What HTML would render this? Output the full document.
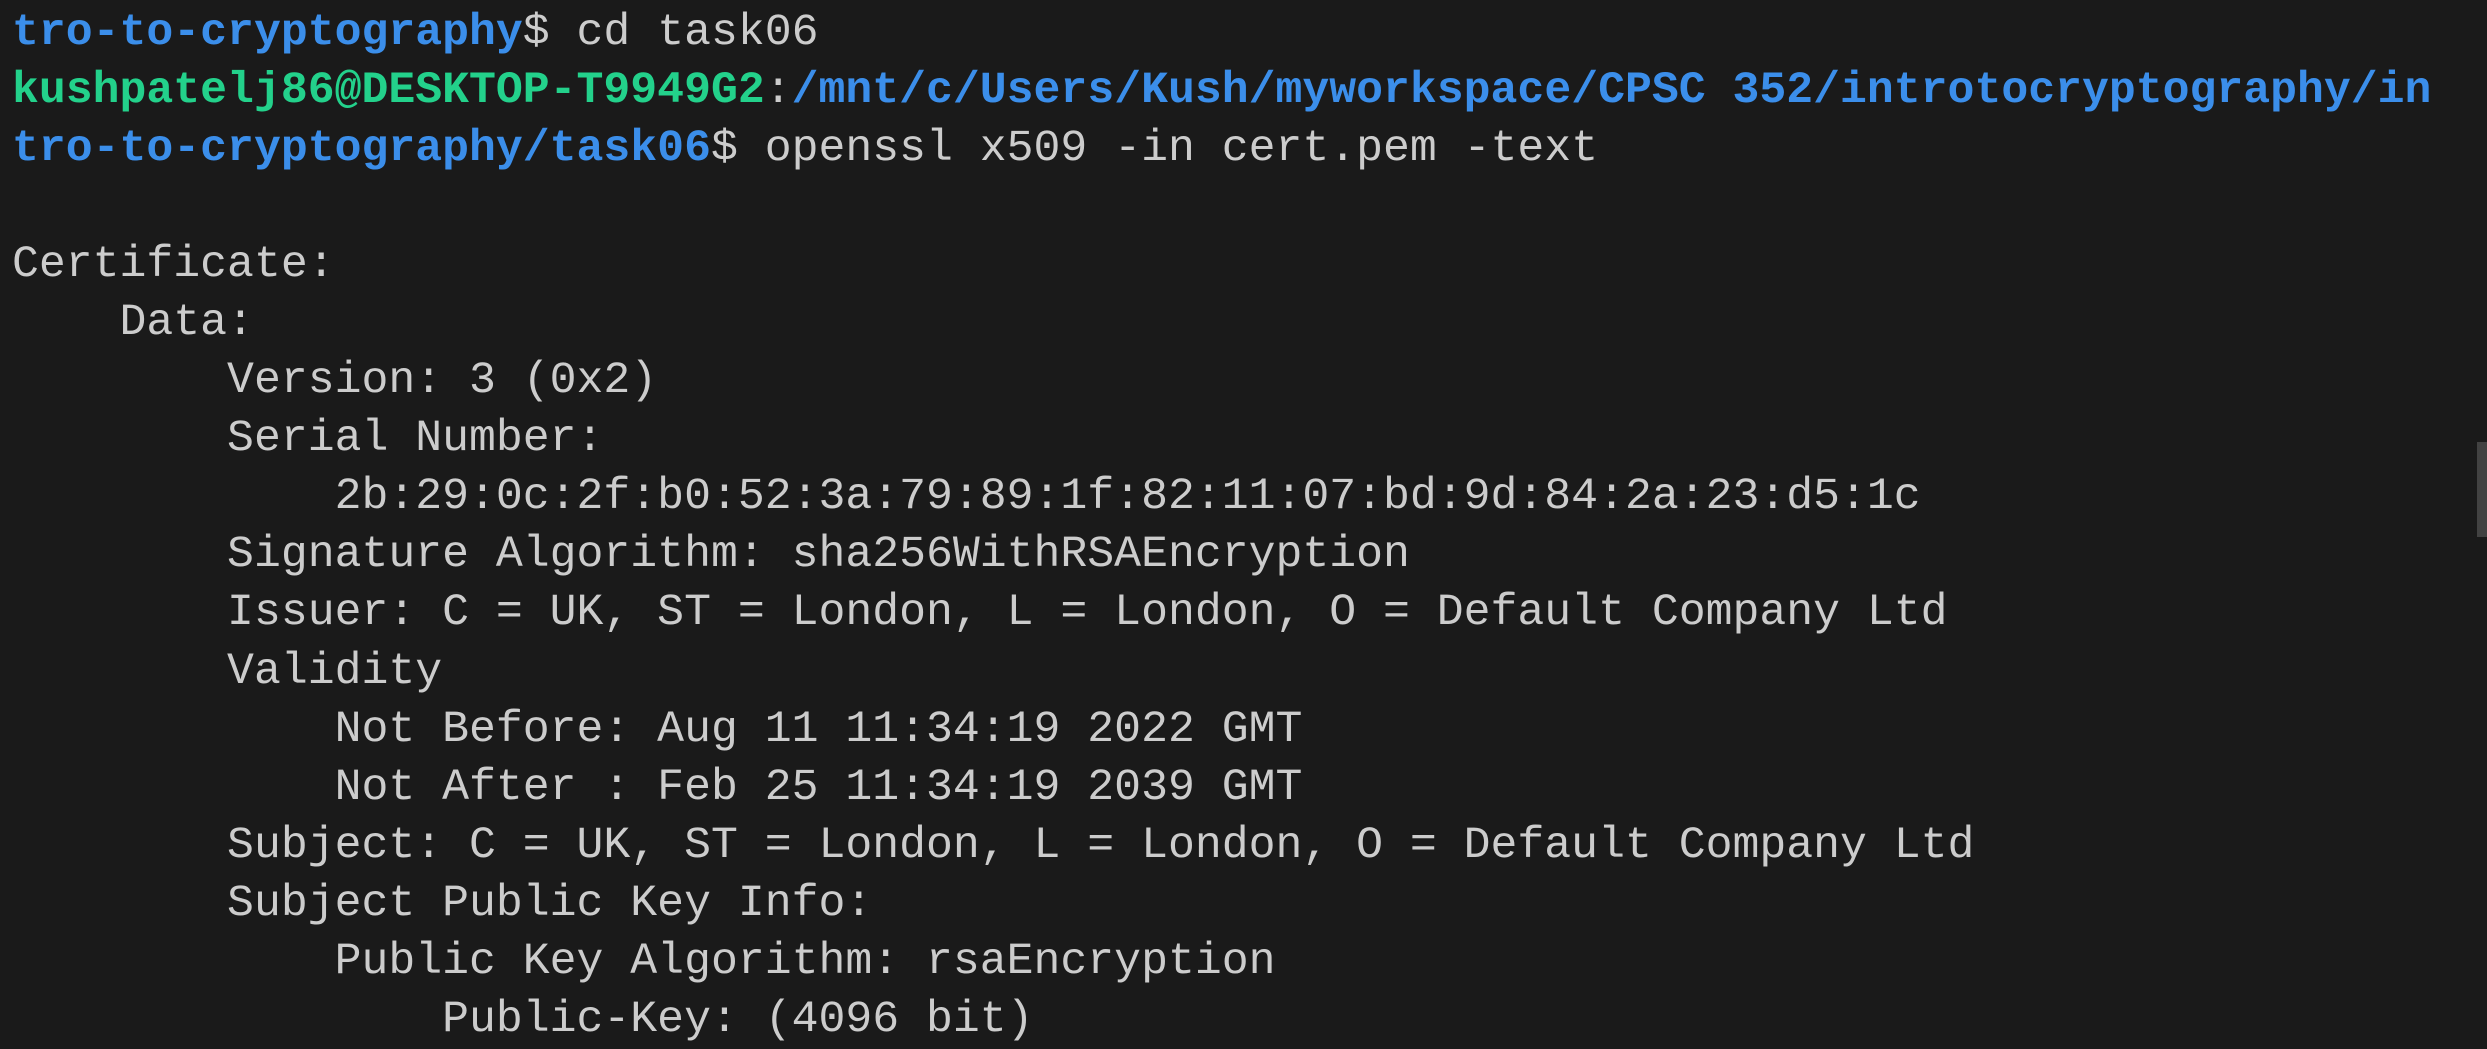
<!DOCTYPE html>
<html><head><style>
html,body{margin:0;padding:0;background:#1a1a1a;width:2487px;height:1038px;overflow:hidden}
pre{margin:0;position:absolute;left:12px;top:4px;font-family:"Liberation Mono",monospace;font-size:44.8px;line-height:58.05px;color:#cccccc;white-space:pre}
.b{color:#3b8eea;font-weight:bold}.g{color:#23d18b;font-weight:bold}
.sb{position:absolute;left:2477px;top:442px;width:10px;height:95px;background:#424242}
</style></head><body>
<pre><span class="b">tro-to-cryptography</span>$ cd task06
<span class="g">kushpatelj86@DESKTOP-T9949G2</span>:<span class="b">/mnt/c/Users/Kush/myworkspace/CPSC 352/introtocryptography/in</span>
<span class="b">tro-to-cryptography/task06</span>$ openssl x509 -in cert.pem -text

Certificate:
    Data:
        Version: 3 (0x2)
        Serial Number:
            2b:29:0c:2f:b0:52:3a:79:89:1f:82:11:07:bd:9d:84:2a:23:d5:1c
        Signature Algorithm: sha256WithRSAEncryption
        Issuer: C = UK, ST = London, L = London, O = Default Company Ltd
        Validity
            Not Before: Aug 11 11:34:19 2022 GMT
            Not After : Feb 25 11:34:19 2039 GMT
        Subject: C = UK, ST = London, L = London, O = Default Company Ltd
        Subject Public Key Info:
            Public Key Algorithm: rsaEncryption
                Public-Key: (4096 bit)</pre>
<div class="sb"></div>
</body></html>
